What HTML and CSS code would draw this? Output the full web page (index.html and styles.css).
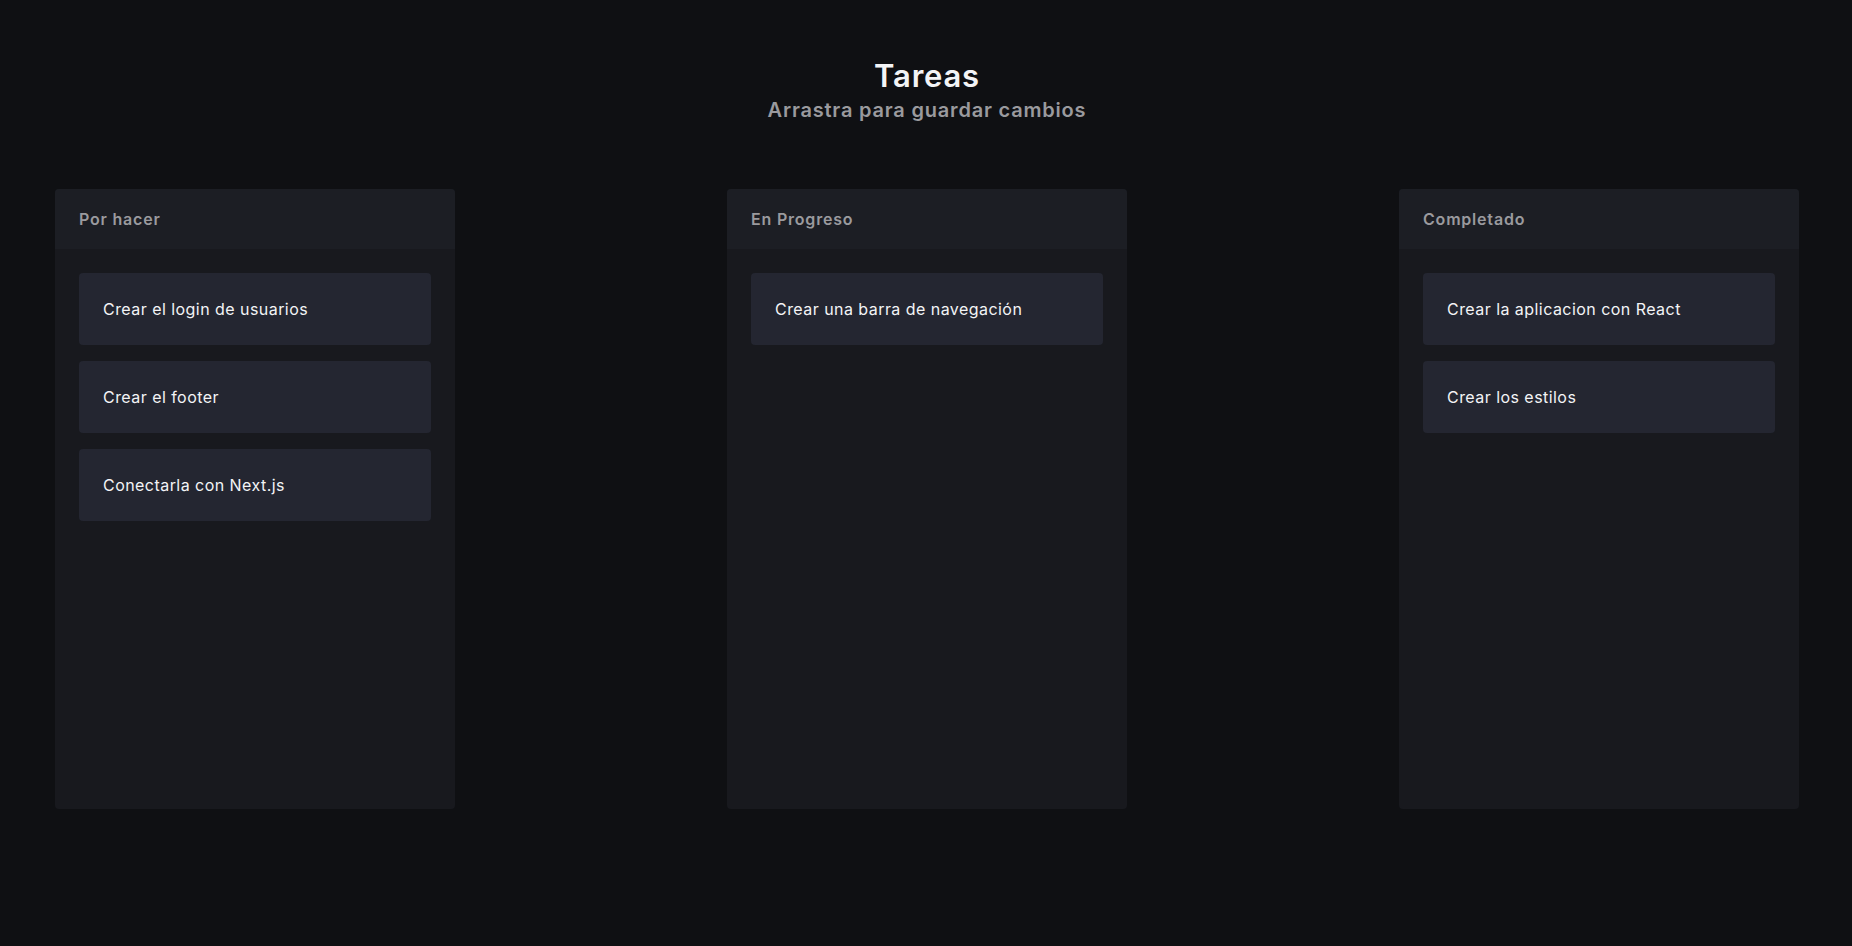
FILE: index.html
```html
<!DOCTYPE html>
<html lang="es">
<head>
<meta charset="utf-8">
<title>Tareas</title>
<link rel="stylesheet" href="styles.css">
</head>
<body>
<main class="page">
  <header class="heading">
    <h1 class="title">Tareas</h1>
    <p class="subtitle">Arrastra para guardar cambios</p>
  </header>
  <section class="board">
    <div class="column">
      <div class="column-header">Por hacer</div>
      <div class="column-body">
        <div class="card">Crear el login de usuarios</div>
        <div class="card">Crear el footer</div>
        <div class="card">Conectarla con Next.js</div>
      </div>
    </div>
    <div class="column">
      <div class="column-header">En Progreso</div>
      <div class="column-body">
        <div class="card">Crear una barra de navegación</div>
      </div>
    </div>
    <div class="column">
      <div class="column-header">Completado</div>
      <div class="column-body">
        <div class="card">Crear la aplicacion con React</div>
        <div class="card">Crear los estilos</div>
      </div>
    </div>
  </section>
</main>
</body>
</html>
```
FILE: styles.css
```css
html, body {
  margin: 0;
  padding: 0;
  background: #0f1013;
  height: 100%;
}
body {
  font-family: Inter, "Noto Sans", sans-serif;
  color: #f3f4f6;
}
.page {
  padding: 58px 53px 0 55px;
}
.heading {
  text-align: center;
}
.title {
  margin: 0;
  font-size: 31px;
  line-height: 36px;
  font-weight: 600;
  letter-spacing: 0.8px;
  color: #f3f4f6;
}
.subtitle {
  margin: 2px 0 0;
  font-size: 20px;
  line-height: 28px;
  font-weight: 600;
  letter-spacing: 0.8px;
  color: #9a9a9e;
}
.board {
  margin-top: 65px;
  display: flex;
  justify-content: space-between;
}
.column {
  width: 400px;
  height: 620px;
  background: #18191e;
  border-radius: 4px;
  overflow: hidden;
  display: flex;
  flex-direction: column;
}
.column-header {
  height: 60px;
  box-sizing: border-box;
  padding: 0 24px;
  display: flex;
  align-items: center;
  background: #1c1e24;
  color: #9a9a9e;
  font-size: 16px;
  font-weight: 600;
  letter-spacing: 0.8px;
}
.column-body {
  padding: 24px;
  display: flex;
  flex-direction: column;
  gap: 16px;
}
.card {
  background: #242631;
  border-radius: 4px;
  padding: 24px;
  font-size: 16px;
  line-height: 24px;
  letter-spacing: 0.45px;
  color: #f3f4f6;
}
```
